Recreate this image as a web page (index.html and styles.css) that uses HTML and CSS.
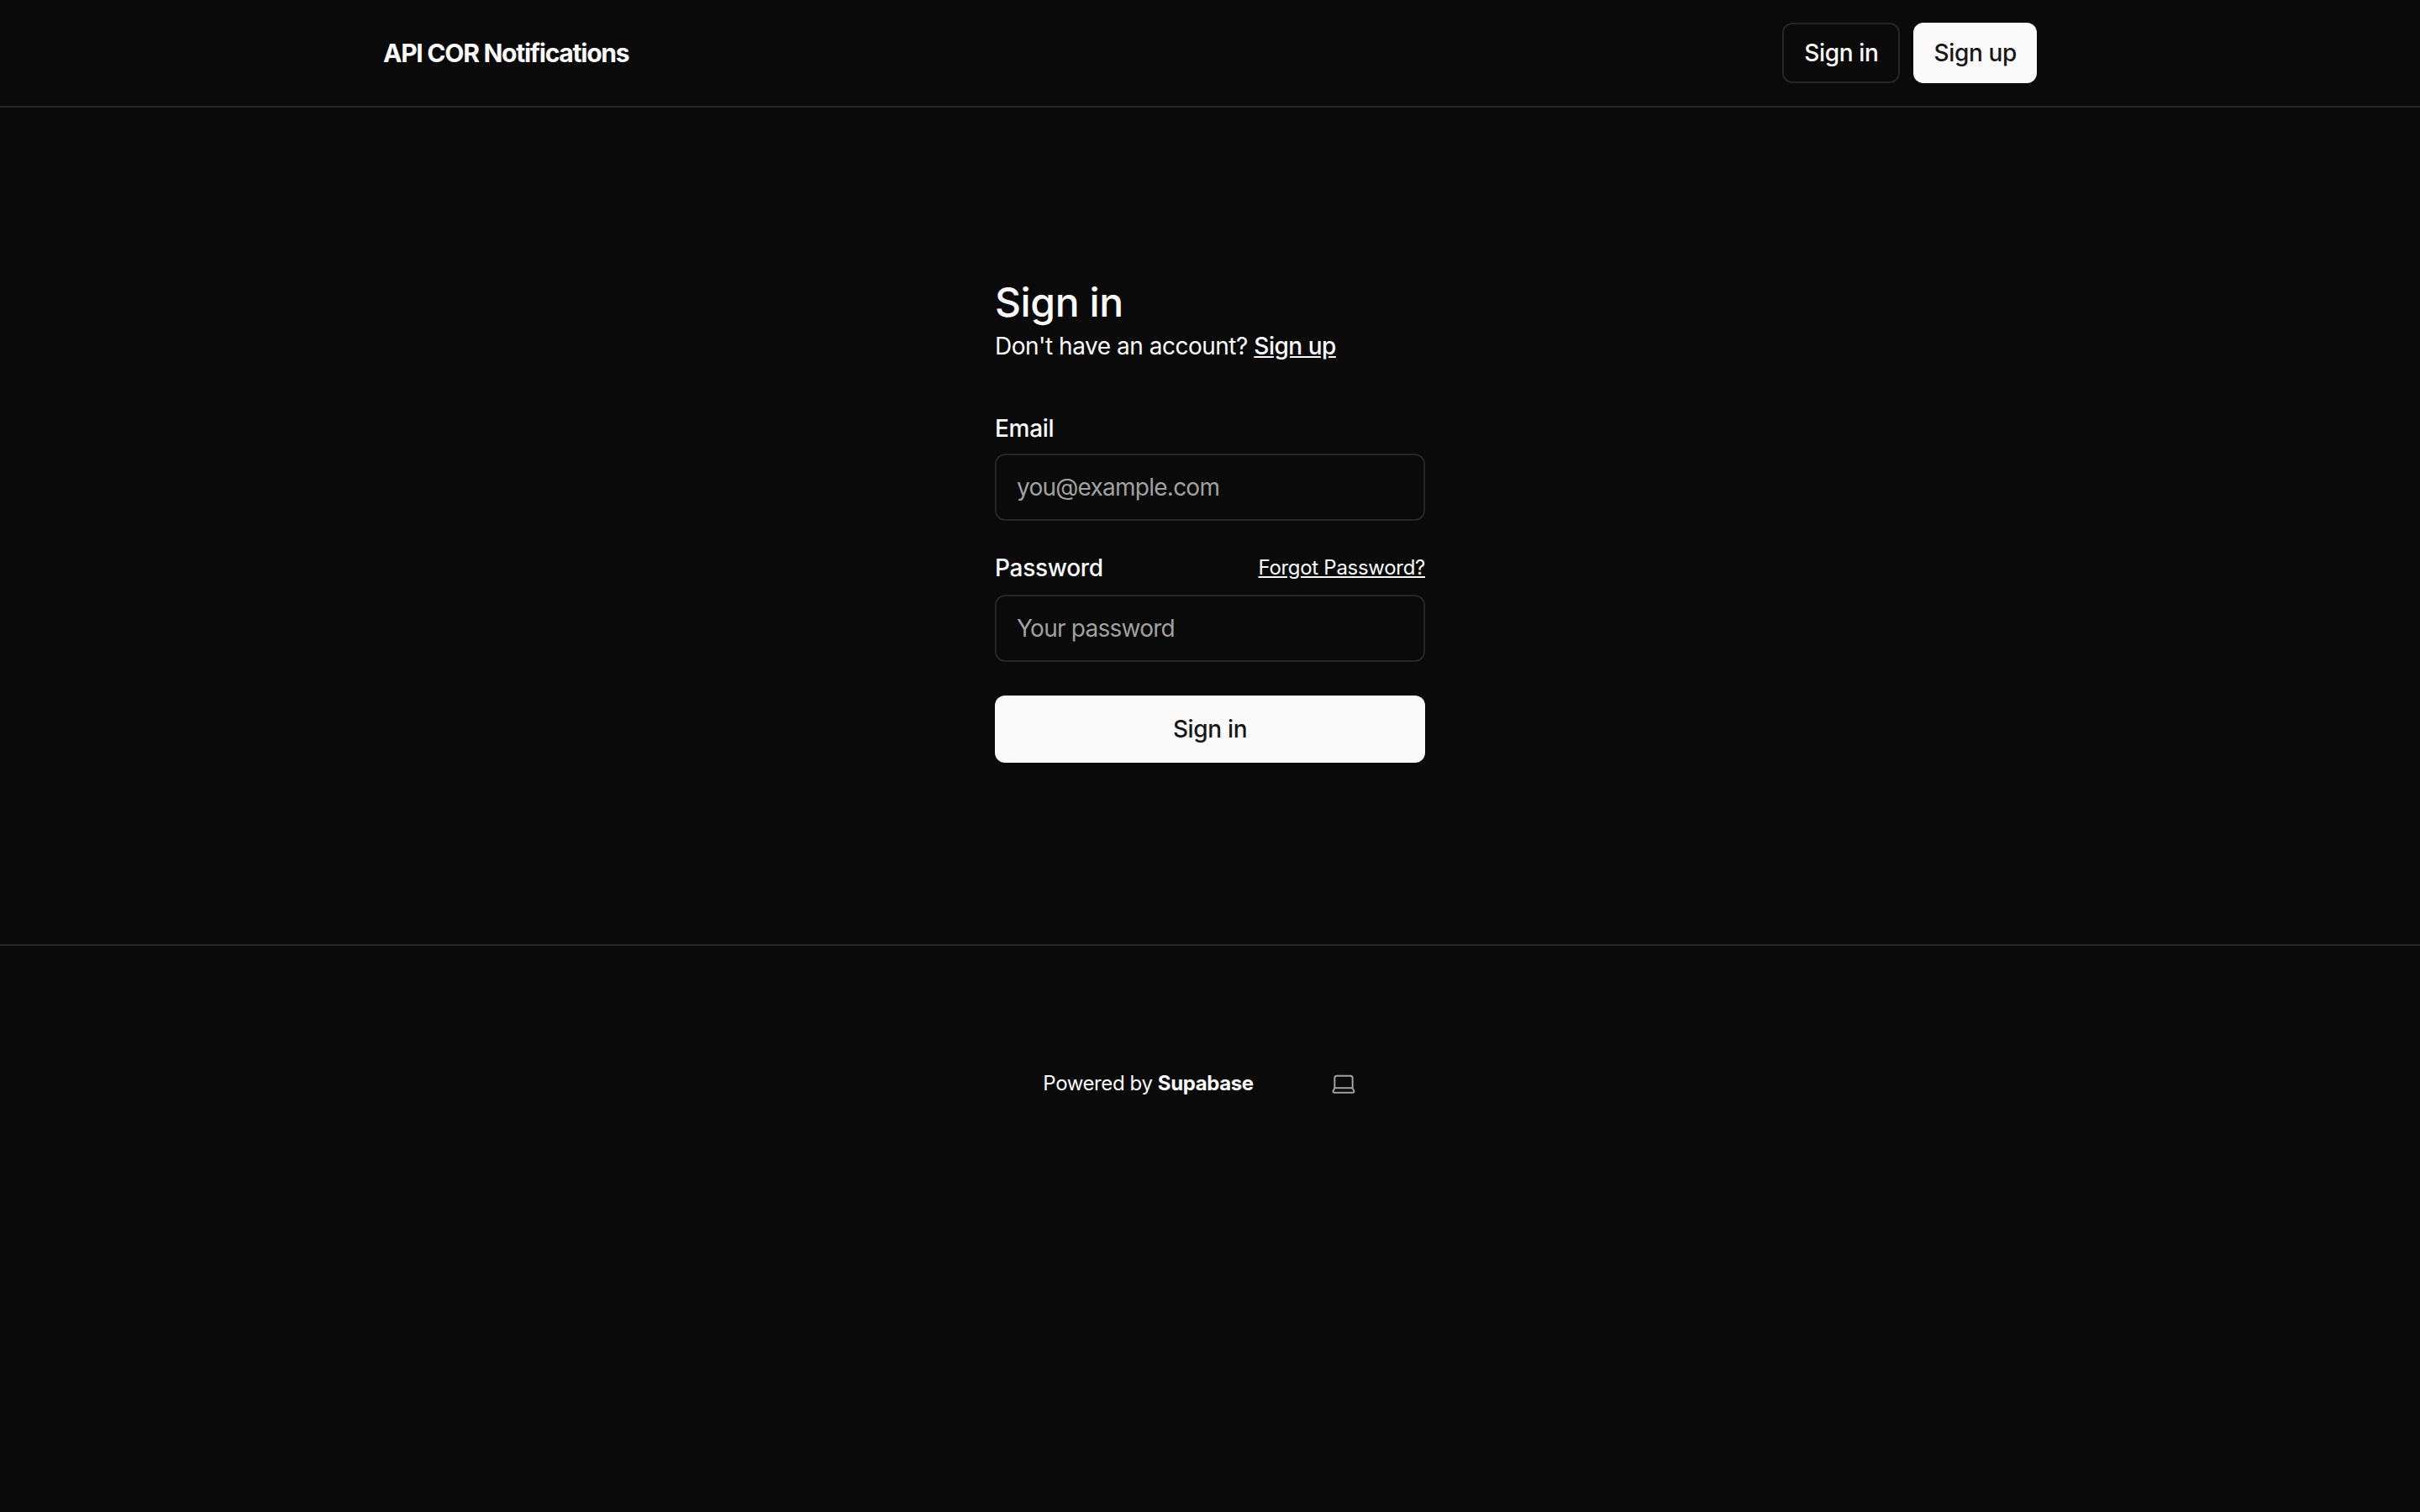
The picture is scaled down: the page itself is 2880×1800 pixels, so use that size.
FILE: index.html
```html
<!DOCTYPE html>
<html lang="en">
<head>
    <meta charset="UTF-8">
    <meta name="viewport" content="width=device-width, initial-scale=1.0">
    <title>API COR Notifications</title>
    <link rel="stylesheet" href="styles.css">
</head>
<body>
    <nav class="nav">
        <div class="nav-inner">
            <a class="brand" href="#">API COR Notifications</a>
            <div class="nav-actions">
                <a class="btn btn-outline" href="#">Sign in</a>
                <a class="btn btn-solid" href="#">Sign up</a>
            </div>
        </div>
    </nav>

    <main class="main">
        <form class="form">
            <h1 class="title">Sign in</h1>
            <p class="subtitle">Don't have an account? <a href="#">Sign up</a></p>

            <div class="fields">
                <label class="label" for="email">Email</label>
                <input class="input" type="email" id="email" placeholder="you@example.com">

                <div class="label-row">
                    <label class="label" for="password">Password</label>
                    <a class="forgot" href="#">Forgot Password?</a>
                </div>
                <input class="input" type="password" id="password" placeholder="Your password">

                <button class="submit" type="button">Sign in</button>
            </div>
        </form>
    </main>

    <footer class="footer">
        <p class="powered">Powered by <strong>Supabase</strong></p>
        <button class="theme" type="button" aria-label="Theme">
            <svg width="32" height="32" viewBox="0 0 24 24" fill="none" stroke="currentColor" stroke-width="1.5" stroke-linecap="round" stroke-linejoin="round">
                <path d="M20 16V7a2 2 0 0 0-2-2H6a2 2 0 0 0-2 2v9m16 0H4m16 0 1.28 2.55a1 1 0 0 1-.9 1.45H3.62a1 1 0 0 1-.9-1.45L4 16"/>
            </svg>
        </button>
    </footer>
</body>
</html>
```

FILE: styles.css
```css
body {
    margin: 0;
    background-color: #0a0a0a;
    color: #fafafa;
    font-family: Inter, "Liberation Sans", sans-serif;
}

a {
    color: inherit;
}

.nav {
    height: 126px;
    border-bottom: 2px solid #262626;
}

.nav-inner {
    display: flex;
    justify-content: space-between;
    align-items: center;
    height: 100%;
    padding: 0 456px;
}

.brand {
    font-size: 30px;
    font-weight: 700;
    letter-spacing: -1.25px;
    text-decoration: none;
}

.nav-actions {
    display: flex;
    gap: 16px;
}

.btn {
    display: flex;
    align-items: center;
    box-sizing: border-box;
    height: 72px;
    padding: 0 24px;
    border-radius: 12px;
    font-size: 28px;
    font-weight: 500;
    letter-spacing: -0.35px;
    text-decoration: none;
}

.btn-outline {
    border: 2px solid #262626;
}

.btn-solid {
    background-color: #fafafa;
    color: #171717;
}

.main {
    display: flex;
    justify-content: center;
    box-sizing: border-box;
    height: 998px;
    padding-top: 200px;
    border-bottom: 2px solid #262626;
}

.form {
    width: 512px;
}

.title {
    margin: 0;
    font-size: 48px;
    font-weight: 500;
    letter-spacing: -0.4px;
    line-height: 64px;
}

.subtitle {
    margin: 0;
    font-size: 28px;
    letter-spacing: -0.48px;
    line-height: 40px;
}

.subtitle a {
    font-weight: 500;
}

.fields {
    display: flex;
    flex-direction: column;
    margin-top: 64px;
}

.label {
    font-size: 28px;
    font-weight: 500;
    letter-spacing: -0.3px;
    line-height: 28px;
}

.label-row {
    display: flex;
    justify-content: space-between;
    align-items: center;
    margin-top: 42px;
    margin-bottom: 18px;
}

.forgot {
    font-size: 24px;
    letter-spacing: -0.3px;
    line-height: 28px;
}

.input {
    box-sizing: border-box;
    height: 80px;
    margin-top: 16px;
    padding: 0 24px;
    border: 2px solid #262626;
    border-radius: 12px;
    background: transparent;
    color: #fafafa;
    font-family: inherit;
    font-size: 28px;
    letter-spacing: -0.75px;
}

.label-row + .input {
    margin-top: 0;
}

.input::placeholder {
    color: #a1a1a1;
}

.submit {
    height: 80px;
    margin-top: 40px;
    border: 0;
    border-radius: 12px;
    background-color: #fafafa;
    color: #171717;
    font-family: inherit;
    font-size: 28px;
    font-weight: 500;
    letter-spacing: -0.35px;
}

.footer {
    display: flex;
    justify-content: center;
    align-items: center;
    gap: 67px;
    padding-top: 140px;
}

.powered {
    margin: 0;
    font-size: 24px;
    letter-spacing: -0.4px;
    line-height: 48px;
}

.powered strong {
    font-weight: 700;
}

.theme {
    display: flex;
    padding: 8px 24px;
    border: 0;
    background: transparent;
    color: #a1a1a1;
}
```
